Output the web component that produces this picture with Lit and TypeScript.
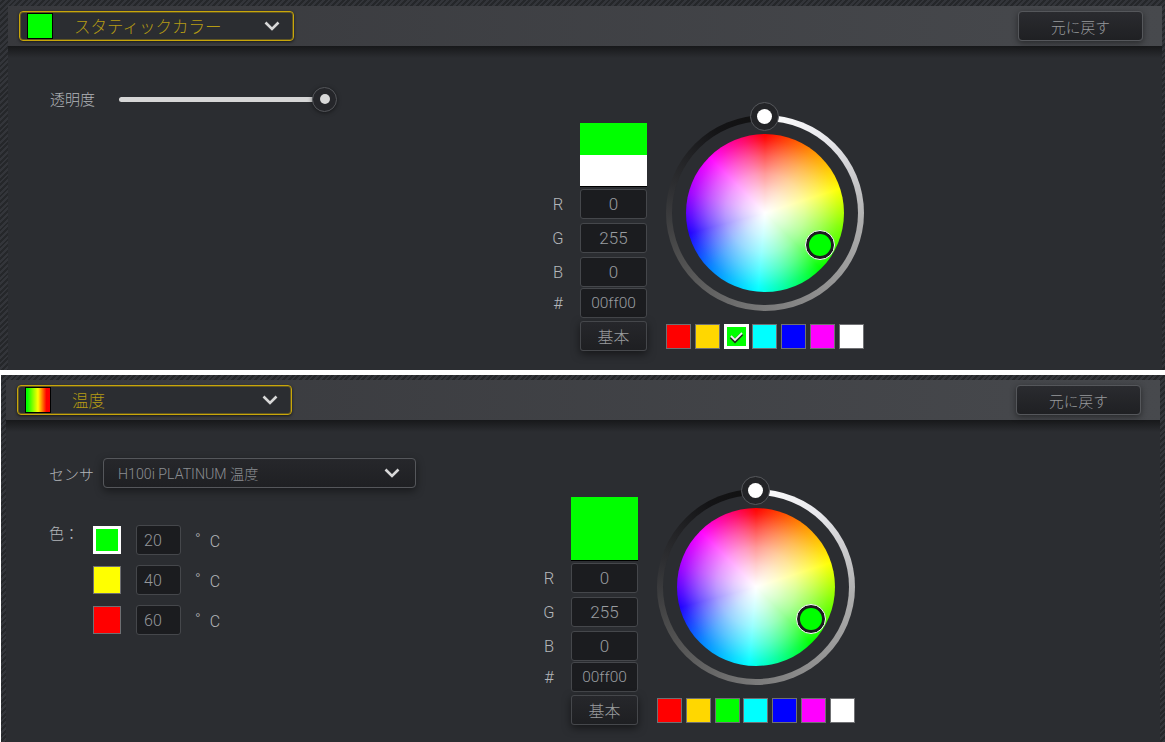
import { css, html, LitElement } from "lit";
import { customElement, property } from "lit/decorators.js";
import { classMap } from "lit/directives/class-map.js";

const chevron = html`<svg class="chev" width="16" height="10" viewBox="0 0 16 10">
  <path d="M1.5 1.5 L8 8 L14.5 1.5" fill="none" stroke="#d8d8d8" stroke-width="2.6"/>
</svg>`;

const SWATCHES = ["#ff0000", "#ffd700", "#00ff00", "#00ffff", "#0000ff", "#ff00ff", "#ffffff"];

@customElement("color-picker")
export class ColorPicker extends LitElement {
  @property({ type: Boolean }) split = false;
  @property({ type: Number }) selected = -1;

  render() {
    return html`<div class="picker">
      <div class="fields">
        <div class="preview">
          <div class="top ${classMap({ full: !this.split })}"></div>
          ${this.split ? html`<div class="bottom"></div>` : ""}
        </div>
        <div class="row"><label>R</label><div class="field">0</div></div>
        <div class="row"><label>G</label><div class="field">255</div></div>
        <div class="row"><label>B</label><div class="field">0</div></div>
        <div class="row hex"><label>#</label><div class="field">00ff00</div></div>
        <div class="row basic"><label></label><button>基本</button></div>
      </div>
      <div class="side">
        <div class="ring">
          <div class="gap">
            <div class="wheel"></div>
          </div>
          <div class="knob"><span></span></div>
          <div class="handle"><span></span></div>
        </div>
        <div class="swatches">
          ${SWATCHES.map((c, i) => this.selected === i
            ? html`<div class="swatch on" style="background:${c}">
                <svg width="17" height="17" viewBox="0 0 17 17">
                  <path d="M3 9 L7 13 L14 6" fill="none" stroke="#222" stroke-width="3.4"/>
                  <path d="M3 8 L7 12 L14 5" fill="none" stroke="#f4f4f4" stroke-width="1.8"/>
                </svg>
              </div>`
            : html`<div class="swatch" style="background:${c}"></div>`)}
        </div>
      </div>
    </div>`;
  }

  static styles = css`
    :host { display: block; font-family: "Roboto", "Noto Sans CJK JP", sans-serif; font-weight: 300; }
    .picker { display: flex; gap: 19px; }
    .fields { width: 95px; }
    .preview { width: 67px; height: 64px; margin-left: 28px; display: flex; flex-direction: column; border-bottom: 1px solid #000; box-sizing: border-box; margin-bottom: 2px; }
    .top { background: #00ff00; height: 32px; }
    .top.full { height: 63px; }
    .bottom { background: #fff; flex: 1; }
    .row { display: flex; align-items: center; height: 30px; margin-bottom: 4px; }
    .row.hex { margin-top: -3px; margin-bottom: 3px; }
    .row label { width: 28px; padding-right: 16px; box-sizing: border-box; text-align: center; color: #b3b6ba; font-size: 16.5px; }
    .field, button {
      width: 67px; height: 30px; box-sizing: border-box;
      border: 1px solid #45474b; border-radius: 3px;
      background: #1b1c1f; color: #999ca0;
      display: flex; align-items: center; justify-content: center;
      font-family: inherit; font-weight: 300; font-size: 17px; padding: 0;
    }
    .hex .field { font-size: 15.5px; }
    button {
      background: linear-gradient(#26272b, #1e1f22);
      box-shadow: 0 3px 8px rgba(0, 0, 0, 0.5);
      color: #9a9c9e; font-size: 16px;
    }
    .side { width: 198px; margin-top: -8px; }
    .ring {
      position: relative; width: 198px; height: 196px; border-radius: 50%;
      background: conic-gradient(#ffffff 0deg, #e8e8ec 40deg, #aeaeae 95deg, #7a7a7a 180deg, #505050 240deg, #2e2f32 285deg, #141416 330deg, #111 358deg);
      display: flex; align-items: center; justify-content: center;
    }
    .gap {
      width: 186px; height: 184px; border-radius: 50%; background: #2b2d31;
      display: flex; align-items: center; justify-content: center;
    }
    .wheel {
      width: 158px; height: 158px; border-radius: 50%;
      background:
        radial-gradient(circle closest-side, #fff 0, rgba(255,255,255,0.95) 8%, rgba(255,255,255,0.8) 28%, rgba(255,255,255,0.6) 50%, rgba(255,255,255,0.34) 72%, rgba(255,255,255,0.08) 92%, rgba(255,255,255,0) 100%),
        conic-gradient(#ff0000 0deg, #ff9000 38deg, #ffff00 72deg, #80ff00 100deg, #00ff00 135deg, #00ffa0 165deg, #00ffff 185deg, #0080ff 225deg, #2000ff 255deg, #a000ff 285deg, #ff00ff 315deg, #ff0060 345deg, #ff0000 360deg);
    }
    .knob {
      position: absolute; left: 84px; top: -13px; width: 29px; height: 29px; box-sizing: border-box;
      border-radius: 50%; background: #232427; border: 1px solid #56585c;
      display: flex; align-items: center; justify-content: center;
    }
    .knob span { width: 15px; height: 15px; border-radius: 50%; background: #fff; }
    .handle {
      position: absolute; left: 139px; top: 115px; width: 30px; height: 30px; box-sizing: border-box;
      border-radius: 50%; background: #1c1d1f; border: 1px solid #fff;
      display: flex; align-items: center; justify-content: center;
    }
    .handle span { width: 22px; height: 22px; border-radius: 50%; background: #00ff00; }
    .swatches { display: flex; justify-content: space-between; margin-top: 13px; }
    .swatch {
      width: 25px; height: 25px; box-sizing: border-box; border: 1px solid #6f7073;
      display: flex; align-items: center; justify-content: center;
    }
    .swatch.on { border: 3px solid #fff; }
  `;
}

@customElement("effect-panel")
export class EffectPanel extends LitElement {
  @property() title = "";
  @property() kind = "static";

  render() {
    return html`<div class="panel ${this.kind}">
      <div class="bar">
        <div class="select">
          <span class="thumb"></span>
          <span class="name">${this.title}</span>
          ${chevron}
        </div>
        <button class="reset">元に戻す</button>
      </div>
      <div class="body">
        <slot></slot>
      </div>
    </div>`;
  }

  static styles = css`
    :host { display: block; font-family: "Roboto", "Noto Sans CJK JP", sans-serif; }
    .panel {
      background: repeating-linear-gradient(135deg, #33353a 0 2px, #25272a 2px 4px);
      box-sizing: border-box;
    }
    .static { height: 370px; padding: 6px 3px 0 8px; }
    .temp { height: 367px; padding: 5px 5px 0 5px; margin-left: 1px; }
    .bar {
      height: 40px; display: flex; align-items: center; justify-content: space-between;
      padding: 0 19px 0 11px;
      background: linear-gradient(90deg, #38393d, #47494d);
      box-sizing: border-box;
    }
    .select {
      width: 275px; height: 30px; box-sizing: border-box; display: flex; align-items: center;
      border: 1px solid #c8a60a; border-radius: 4px; background: #2b2d31;
      box-shadow: 0 1px 3px rgba(0, 0, 0, 0.6), inset 0 0 0 1px rgba(200, 166, 10, 0.35);
      padding: 0 13px 0 7px;
    }
    .thumb {
      width: 26px; height: 26px; box-sizing: border-box; border: 1px solid #000; background: #00ff00;
    }
    .temp .thumb { background: linear-gradient(90deg, #00ff00 5%, #ffff00 50%, #ff0000 85%); }
    .name { flex: 1; margin-left: 21px; color: #b59b14; font-size: 16.5px; font-weight: 300; }
    .reset {
      width: 125px; height: 30px; box-sizing: border-box; padding: 0;
      border: 1px solid #55575b; border-radius: 4px;
      background: linear-gradient(#2a2b2f, #1f2023);
      box-shadow: 0 2px 6px rgba(0, 0, 0, 0.45);
      color: #97999c; font-family: inherit; font-weight: 300; font-size: 14.7px;
    }
    .body {
      height: 324px; background: linear-gradient(#17181a 0, #2b2d31 12px);
      box-sizing: border-box;
    }
  `;
}

@customElement("app-root")
export class AppRoot extends LitElement {
  render() {
    return html`<effect-panel title="スタティックカラー" kind="static">
        <div class="content first">
          <div class="left">
            <div class="opacity">
              <span>透明度</span>
              <div class="slider"><div class="thumb"><i></i></div></div>
            </div>
          </div>
          <color-picker split selected="2"></color-picker>
        </div>
      </effect-panel>
      <div class="divider"></div>
      <effect-panel title="温度" kind="temp">
        <div class="content second">
          <div class="left">
            <div class="sensor">
              <span>センサ</span>
              <div class="dropdown"><span>H100i PLATINUM 温度</span>${chevron}</div>
            </div>
            <div class="colors">
              <span class="lbl">色：</span>
              <div class="stops">
                ${[["#00ff00", "20", true], ["#ffff00", "40", false], ["#ff0000", "60", false]].map(
                  ([c, v, on]) => html`<div class="stop">
                    <div class="chip ${classMap({ on: !!on })}" style="background:${c}"></div>
                    <div class="val">${v}</div>
                    <span class="deg">°</span><span class="c">C</span>
                  </div>`
                )}
              </div>
            </div>
          </div>
          <color-picker></color-picker>
        </div>
      </effect-panel>`;
  }

  static styles = css`
    :host { display: block; background: #fff; height: 742px; overflow: hidden; font-family: "Roboto", "Noto Sans CJK JP", sans-serif; font-weight: 300; color: #b3b6ba; font-size: 15px; }
    .divider { height: 5px; background: #fff; }
    .content { display: flex; align-items: flex-start; padding-top: 77px; }
    .left { box-sizing: border-box; }
    .first .left { width: 544px; margin-top: -39px; padding-left: 42px; }
    .second .left { width: 537px; margin-top: -39px; padding-left: 43px; }
    .opacity { display: flex; align-items: center; gap: 24px; height: 30px; }
    .opacity > span { margin-top: -2px; }
    .slider { position: relative; width: 198px; height: 5px; border-radius: 3px; background: #d6d6d6; }
    .thumb {
      position: absolute; right: -20px; top: -10px; width: 25px; height: 25px; box-sizing: border-box;
      border-radius: 50%; background: #25262a; border: 1px solid #55575b;
      box-shadow: 0 1px 4px rgba(0, 0, 0, 0.5);
      display: flex; align-items: center; justify-content: center;
    }
    .thumb i { width: 10px; height: 10px; border-radius: 50%; background: #d8d8d8; }
    .sensor { display: flex; align-items: center; gap: 9px; }
    .dropdown {
      width: 313px; height: 30px; box-sizing: border-box; display: flex; align-items: center; justify-content: space-between;
      border: 1px solid #55575b; border-radius: 4px; padding: 0 15px 0 14px;
      background: linear-gradient(#26272b, #1f2023); box-shadow: 0 3px 8px rgba(0, 0, 0, 0.45);
      color: #8b8e92; font-size: 14.2px;
    }
    .colors { display: flex; margin-top: 38px; }
    .lbl { width: 44px; margin-top: -4px; }
    .stops { display: flex; flex-direction: column; gap: 12px; }
    .stop { display: flex; align-items: center; height: 28px; }
    .chip { width: 28px; height: 28px; box-sizing: border-box; border: 1px solid #6f7073; }
    .chip.on { border: 3px solid #fff; }
    .val {
      width: 45px; height: 30px; box-sizing: border-box; margin-left: 15px; padding-left: 7px;
      display: flex; align-items: center;
      border: 1px solid #45474b; border-radius: 3px; background: #1b1c1f; color: #94979b; font-size: 16px;
    }
    .deg { margin-left: 14px; margin-top: -3px; }
    .c { margin-left: 9px; font-size: 16px; margin-top: 3px; }
  `;
}
